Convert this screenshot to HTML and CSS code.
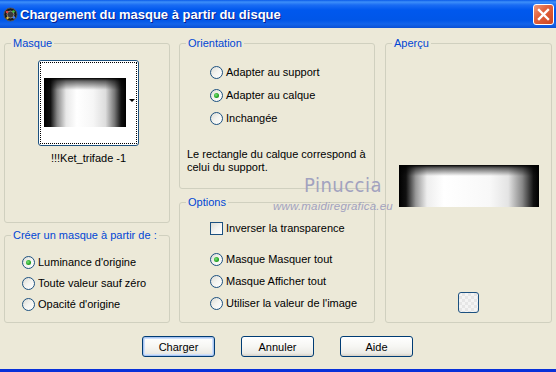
FILE: index.html
```html
<!DOCTYPE html>
<html lang="fr">
<head>
    <meta charset="UTF-8">
    <title>Chargement du masque à partir du disque</title>
    <link rel="stylesheet" href="styles.css">
</head>
<body>
    <div class="window">
        <div class="titlebar">
            <svg class="app-icon" width="15" height="15" viewBox="0 0 15 15">
                <circle cx="7.5" cy="7.5" r="6.5" fill="#1a1a1a" stroke="#555" stroke-width="1"/>
                <circle cx="7.5" cy="7.5" r="3.5" fill="#3a3a3a" stroke="#8a8a8a" stroke-width="1"/>
                <circle cx="4" cy="5" r="1.3" fill="#e04040"/>
                <circle cx="10.5" cy="4.5" r="1.3" fill="#40c040"/>
                <circle cx="11" cy="10.5" r="1.3" fill="#4080ff"/>
                <circle cx="4.5" cy="11" r="1.2" fill="#e0c040"/>
            </svg>
            <span class="title">Chargement du masque à partir du disque</span>
            <span class="close-btn">
                <svg width="13" height="13" viewBox="0 0 13 13">
                    <path d="M2 2 L11 11 M11 2 L2 11" stroke="#fff" stroke-width="2.4" stroke-linecap="square"/>
                </svg>
            </span>
        </div>

        <div class="client">
            <div class="panels">
                <div class="col col-left">
                    <fieldset class="group group-masque">
                        <legend>Masque</legend>
                        <div class="mask-wrap">
                            <div class="mask-picker">
                                <div class="mask-focus">
                                    <div class="mask-thumb"></div>
                                </div>
                                <span class="drop-arrow"></span>
                            </div>
                            <div class="mask-name">!!!Ket_trifade -1</div>
                        </div>
                    </fieldset>
                    <fieldset class="group group-source">
                        <legend>Créer un masque à partir de :</legend>
                        <div class="options-list source-list">
                            <div class="opt"><span class="radio checked"></span>Luminance d'origine</div>
                            <div class="opt"><span class="radio"></span>Toute valeur sauf zéro</div>
                            <div class="opt"><span class="radio"></span>Opacité d'origine</div>
                        </div>
                    </fieldset>
                </div>

                <div class="col col-mid">
                    <fieldset class="group group-orient">
                        <legend>Orientation</legend>
                        <div class="options-list orient-list">
                            <div class="opt"><span class="radio"></span>Adapter au support</div>
                            <div class="opt"><span class="radio checked"></span>Adapter au calque</div>
                            <div class="opt"><span class="radio"></span>Inchangée</div>
                        </div>
                        <p class="note">Le rectangle du calque correspond à<br>celui du support.</p>
                    </fieldset>
                    <fieldset class="group group-options">
                        <legend>Options</legend>
                        <div class="opt check-row"><span class="checkbox"></span>Inverser la transparence</div>
                        <div class="options-list mode-list">
                            <div class="opt"><span class="radio checked"></span>Masque Masquer tout</div>
                            <div class="opt"><span class="radio"></span>Masque Afficher tout</div>
                            <div class="opt"><span class="radio"></span>Utiliser la valeur de l'image</div>
                        </div>
                    </fieldset>
                </div>

                <div class="col col-right">
                    <fieldset class="group group-preview">
                        <legend>Aperçu</legend>
                        <div class="preview-img"></div>
                        <span class="bg-btn"></span>
                    </fieldset>
                </div>
            </div>

            <div class="actions">
                <button class="btn btn-default">Charger</button>
                <button class="btn">Annuler</button>
                <button class="btn">Aide</button>
            </div>
        </div>

        <div class="watermark">
            <div class="wm-name">Pinuccia</div>
            <div class="wm-url">www.maidiregrafica.eu</div>
        </div>
    </div>
</body>
</html>
```

FILE: styles.css
```css
* {
    box-sizing: border-box;
}
body {
    margin: 0;
    background: #ece9d8;
    font-family: "Liberation Sans", Arial, sans-serif;
    font-size: 11px;
    color: #000;
}
.window {
    position: relative;
    width: 556px;
    height: 372px;
    background: #ece9d8;
    border-bottom: 3px solid #0831d9;
    overflow: hidden;
}

/* barre de titre */
.titlebar {
    height: 28px;
    display: flex;
    align-items: center;
    padding: 0 1px 0 3px;
    background: linear-gradient(to bottom, #0a5ae8 0, #3d8ff9 2px, #1a6cf3 5px, #0058ee 10px, #0056e8 20px, #1364ea 24px, #0a50d4 28px);
}
.app-icon {
    flex: none;
    margin-top: 1px;
}
.title {
    margin-left: 2px;
    color: #fff;
    font-weight: bold;
    font-size: 13px;
    text-shadow: 1px 1px 0 #0a1e8c;
    flex: 1;
}
.close-btn {
    width: 21px;
    height: 21px;
    margin-right: 1px;
    border: 1px solid #fff;
    border-radius: 3px;
    display: flex;
    align-items: center;
    justify-content: center;
    background: linear-gradient(135deg, #f09a7c 0%, #e2633e 40%, #cc4520 100%);
}

/* zone cliente */
.client {
    padding: 9px 4px 0 4px;
}
.panels {
    display: flex;
    gap: 9px;
}
.col {
    display: flex;
    flex-direction: column;
}
.col-left {
    width: 166px;
    gap: 6px;
}
.col-mid {
    width: 196px;
    gap: 7px;
    margin-right: 1px;
}
.col-right {
    width: 167px;
}

.group {
    margin: 0;
    padding: 0;
    min-width: 0;
    border: 1px solid #d0d0bf;
    border-radius: 3px;
}
.group legend {
    margin-left: 6px;
    padding: 0 2px;
    color: #0046d5;
    line-height: 13px;
}
.group-masque { height: 186px; }
.group-source { height: 94px; }
.group-orient { height: 152px; }
.group-options { height: 127px; }
.group-preview { height: 286px; }

/* sélecteur de masque */
.mask-wrap {
    width: 101px;
    margin: 10px 0 0 33px;
}
.mask-picker {
    position: relative;
    height: 86px;
    padding: 1px;
    border: 1px solid #1c5180;
    border-radius: 3px;
    background: #fff;
}
.mask-focus {
    height: 82px;
    border: 1px dotted #000;
    padding: 15px 0 0 3px;
}
.mask-thumb {
    width: 82px;
    height: 49px;
    background:
        linear-gradient(to bottom, #000 0, rgba(0,0,0,0.6) 3px, rgba(0,0,0,0) 12px),
        linear-gradient(to right, #000 0, #111 8%, #888 16%, #e8e8e8 27%, #fff 40%, #f6f6f6 60%, #ddd 75%, #777 86%, #111 94%, #000 100%);
}
.drop-arrow {
    position: absolute;
    right: 3px;
    top: 38px;
    width: 0;
    height: 0;
    border-left: 3px solid transparent;
    border-right: 3px solid transparent;
    border-top: 3px solid #000;
}
.mask-name {
    margin-top: 6px;
    text-align: center;
    line-height: 13px;
}

/* boutons radio / cases */
.options-list {
    display: flex;
    flex-direction: column;
}
.opt {
    display: flex;
    align-items: center;
    height: 13px;
    line-height: 13px;
    white-space: nowrap;
}
.radio, .checkbox {
    flex: none;
    width: 13px;
    height: 13px;
    margin-right: 3px;
    border: 1px solid #1c5180;
    background: linear-gradient(135deg, #dcdcd5 0%, #f4f4f0 50%, #fff 100%);
    display: flex;
    align-items: center;
    justify-content: center;
}
.radio {
    border-radius: 50%;
}
.radio.checked::after {
    content: "";
    width: 5px;
    height: 5px;
    border-radius: 50%;
    background: radial-gradient(circle at 40% 40%, #7be47b 0, #21a121 60%, #1a801a 100%);
}
.source-list {
    padding: 14px 0 0 17px;
    gap: 8px;
}
.orient-list {
    padding: 16px 0 0 30px;
    gap: 10px;
}
.note {
    margin: 23px 0 0 7px;
    line-height: 13px;
}
.check-row {
    margin: 13px 0 0 30px;
}
.mode-list {
    padding: 18px 0 0 30px;
    gap: 9px;
}

/* aperçu */
.group-preview {
    display: flex;
    flex-direction: column;
    align-items: center;
}
.preview-img {
    width: 140px;
    height: 42px;
    margin-top: 115px;
    background:
        linear-gradient(to bottom, #000 0, rgba(0,0,0,0.6) 3px, rgba(0,0,0,0) 11px),
        linear-gradient(to right, #000 0, #111 5%, #999 12%, #eee 20%, #fff 32%, #f8f8f8 65%, #e4e4e4 78%, #888 88%, #111 96%, #000 100%);
}
.bg-btn {
    width: 21px;
    height: 21px;
    margin-top: 85px;
    border: 1px solid #1c5180;
    border-radius: 3px;
    background-color: #f4f4f4;
    background-image:
        linear-gradient(45deg, #e6e6e6 25%, transparent 25%, transparent 75%, #e6e6e6 75%),
        linear-gradient(45deg, #e6e6e6 25%, transparent 25%, transparent 75%, #e6e6e6 75%);
    background-size: 6px 6px;
    background-position: 0 0, 3px 3px;
}

/* boutons du bas */
.actions {
    display: flex;
    justify-content: center;
    gap: 26px;
    margin-top: 13px;
    padding-right: 1px;
}
.btn {
    width: 73px;
    height: 21px;
    padding: 0;
    font-family: inherit;
    font-size: 11px;
    color: #000;
    border: 1px solid #003c74;
    border-radius: 3px;
    background: linear-gradient(to bottom, #fff 0%, #f6f6f3 50%, #ecebe6 85%, #d6d0c5 100%);
}
.btn-default {
    box-shadow: inset 0 0 0 1px #a9c4f0, inset 0 0 0 2px #cee0fb;
}

/* filigrane */
.watermark {
    position: absolute;
    left: 273px;
    top: 174px;
    width: 120px;
    color: #a2a2bf;
    pointer-events: none;
}
.wm-name {
    font-family: "DejaVu Sans Condensed", "DejaVu Sans", sans-serif;
    font-size: 20px;
    line-height: 22px;
    letter-spacing: 0.5px;
    padding-left: 31px;
}
.wm-url {
    margin-top: 4px;
    font-size: 11.5px;
    font-style: italic;
    line-height: 12px;
    letter-spacing: 0.2px;
}
```
